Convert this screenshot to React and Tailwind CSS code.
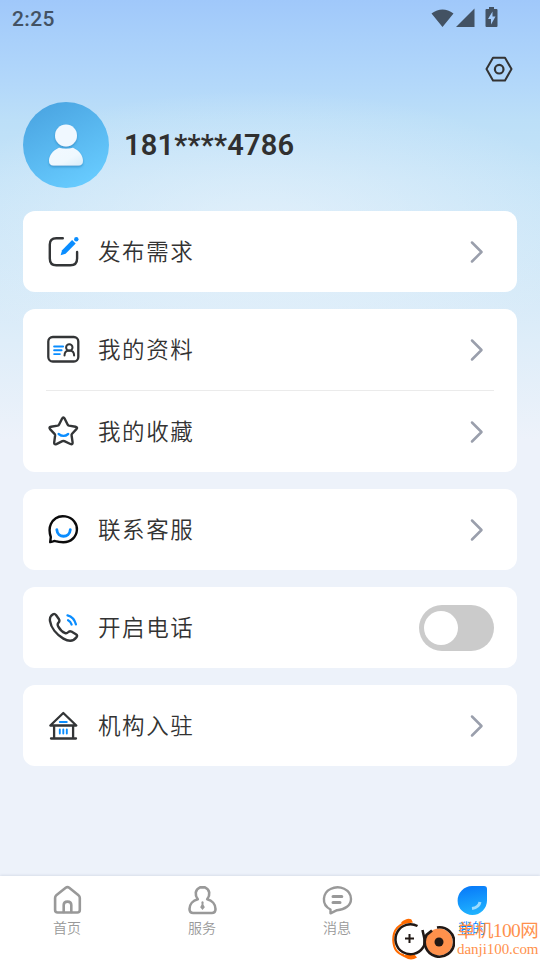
import React from "react";

const cjk = "font-['Noto_Sans_CJK_SC',sans-serif]";

function Chevron() {
  return (
    <svg width="18" height="26" viewBox="0 0 18 26" fill="none" stroke="#9a9fac" strokeWidth="2.5" strokeLinecap="round" strokeLinejoin="round" className="mr-[9px] shrink-0">
      <path d="M5 3.5 14.500 13 5 22.500" />
    </svg>
  );
}

function Row({ icon, label, children, className = "h-[81px]" }) {
  return (
    <div className={`flex items-center ${className}`}>
      <svg width="34" height="34" viewBox="-0.8 0.5 34 34" fill="none" stroke="#333537" strokeWidth="2.4" strokeLinecap="round" strokeLinejoin="round" className="shrink-0">
        {icon}
      </svg>
      <span className={`${cjk} ml-[18px] flex-1 pb-[4px] text-[22.5px] font-[350] leading-[34px] tracking-[1.6px] text-[#333]`}>{label}</span>
      {children || <Chevron />}
    </div>
  );
}

function Card({ children }) {
  return <section className="rounded-[12px] bg-white px-[23px]">{children}</section>;
}

const blue = "#0a8dff";

const icons = {
  edit: (
    <>
      <path d="M16 3.700H9.500Q3 3.700 3 10V24Q3 30.800 9.500 30.800H23.500Q30.300 30.800 30.300 24V17.500" />
      <path d="M13.800 20.800 15.300 15.800 25.300 5.500 28.900 8.900 18.800 19.200Z" fill={blue} stroke="none" />
      <circle cx="29.500" cy="4.700" r="2.200" fill={blue} stroke="none" />
    </>
  ),
  card: (
    <>
      <rect x="1.500" y="4.500" width="30" height="24.500" rx="4.500" strokeWidth="2.300" />
      <path d="M7.300 14h9M7.300 17.800h7.500M7.300 21.600h5.800" stroke={blue} strokeWidth="1.900" />
      <circle cx="22.500" cy="15" r="3.200" strokeWidth="2" />
      <path d="M17.700 23q0-5 4.800-5t4.800 5" strokeWidth="2" />
    </>
  ),
  star: (
    <>
      <path d="M15.200 4.200Q16.500 1.700 17.900 4.200L20.800 10Q21.200 10.900 22.200 11.100L28.700 12.200Q31.300 12.800 29.600 14.600L25.300 19.200Q24.600 20 24.800 21L25.800 27.800Q26 30.500 23.600 29.500L17.600 26.700Q16.600 26.300 15.600 26.700L9.600 29.600Q7.200 30.500 7.400 27.900L8.300 21.200Q8.400 20.100 7.700 19.300L3.200 14.600Q1.800 12.700 4.200 12.200L10.900 11.100Q11.900 10.900 12.300 10Z" />
      <path d="M11.800 19.500q5 3.800 9.600 0" stroke={blue} strokeWidth="2.3" />
    </>
  ),
  chat: (
    <>
      <path d="M3.400 29.600 4 24.500Q1.500 17 4.100 11.500C7 5.700 12.500 3 18.500 3.900C26 5 30.500 11 30.100 17.500C29.700 24.500 24 29.700 16.500 29.800Q11.800 29.700 8.600 28.700Q7.500 28.300 6.500 28.800Z" stroke="#0b0b0c" strokeWidth="2.4" />
      <path d="M10 17.200c.6 8.700 12.900 8.700 13.500 0" stroke={blue} strokeWidth="2.800" />
    </>
  ),
  phone: (
    <>
      <path d="M4.400 5.200 6.300 3.700Q7.800 2.800 9.200 4.500L12.200 8.800Q13.200 10.500 11.700 12.200C10.300 13.600 10.500 14.400 11.500 16.200C13.300 19.500 15.900 21.700 18.400 22.700Q20 23.200 21.300 21.800Q22.700 20.100 24.600 21.100L29.500 24.100Q30.900 25.100 29.700 26.800C26.500 31.200 21.500 31 16.600 28.100C9.700 24.100 4.200 17.200 3.200 10.500Q2.700 7 4.400 5.200Z" />
      <path d="M21.300 9.800q2.800 1.300 3.500 4.200M20.700 4.800q6.500 1.700 8.400 9" stroke={blue} strokeWidth="2.300" />
    </>
  ),
  house: (
    <>
      <path d="M3.500 17 16.500 4.500 29.500 17ZM7.300 17V29.500M26.300 17V29.500M4.200 30h25" strokeWidth="2.300" />
      <path d="M13 13.500h7M13 21v4M16.500 21v4M20 21v4" stroke={blue} strokeWidth="1.900" />
    </>
  ),
};

function Toggle() {
  return (
    <div className="flex h-[46px] w-[75px] items-center rounded-full bg-[#cbcbcb] pl-[5px]">
      <div className="size-[34px] rounded-full bg-white" />
    </div>
  );
}

function Tab({ label, children, active }) {
  return (
    <div className="flex flex-1 flex-col items-center pr-px pt-[8px]">
      <svg width="32" height="32" viewBox="-0.5 0 32 32" fill="none" stroke="#999" strokeWidth="2.700" strokeLinecap="round" strokeLinejoin="round">
        {children}
      </svg>
      <span className={`${cjk} text-[14px] font-[350] leading-[22px] ${active ? "text-[#0787ff]" : "text-[#999]"}`}>{label}</span>
    </div>
  );
}

function Watermark() {
  return (
    <div className="absolute bottom-0 right-[2px] flex h-[43px] items-end">
      <svg width="64" height="43" viewBox="0 0 64 43" fill="none" className="mr-[2px]">
        <path d="M20.500 3.500C7 6.500 2 14 2.200 23C2.500 32 7 37 13 38.200" stroke="#ff6b00" strokeWidth="2" />
        <path d="M10 5.600Q16 .5 20 2.300L22 5.500 12 7ZM10 38.500 23 37 26 40.500Q20 44.500 14 40.500Z" fill="#ff6b00" />
        <path d="M26.500 9A15 15 0 1 0 32 30.500C36 25 32.500 19.500 31.500 13" stroke="#211815" strokeWidth="2.5" />
        <path d="M14 21.500h9M18.500 17v9" stroke="#211815" strokeWidth="2" />
        <circle cx="48.200" cy="25" r="13.500" fill="#ff914c" />
        <path d="M46 10.500A14.700 14.700 0 1 1 35.500 18L41 13.500" stroke="#211815" strokeWidth="2.700" />
        <circle cx="48" cy="25" r="4.500" fill="#211815" />
      </svg>
      <div className="flex w-[81px] flex-col pb-[2px] text-[#ff914c]">
        <span className="whitespace-nowrap font-['Liberation_Serif','Noto_Sans_CJK_SC',serif] text-[18.500px] leading-[20px] tracking-[-0.6px]">单机<span className="text-[19.500px] tracking-[-0.6px]">100</span>网</span>
        <span className="whitespace-nowrap font-['Liberation_Serif',serif] text-[15px] leading-[17px] tracking-[-0.05px]">danji100.com</span>
      </div>
    </div>
  );
}

export default function App() {
  return (
    <div className="relative flex h-[960px] w-[540px] flex-col overflow-hidden bg-[#edf2fa] bg-[radial-gradient(ellipse_340px_140px_at_260px_230px,rgba(240,246,252,0.6),rgba(240,246,252,0)),linear-gradient(180deg,#a0c8fa_0px,#a9d0fa_40px,#b3d8fa_85px,#bcdff8_120px,#c6e4f8_180px,#d0e8f8_260px,#deedf9_340px,#edf2fa_440px)]">
      <header className="flex h-[36px] items-center justify-between pl-[12px] pr-[41px] text-[#435263]">
        <span className="pt-px font-[Roboto,sans-serif] text-[21px] font-[470] leading-[24px] tracking-[0.4px]">2:25</span>
        <svg width="68" height="22" viewBox="-0.5 0 68 22" fill="currentColor">
          <path d="M0 6.500Q11 -1.500 22 6.500L11 20ZM43 1.500V20H24.500Z" />
          <path fillRule="evenodd" d="M57.500 0h5v2h2.500q1 0 1 1v16q0 1-1 1H55q-1 0-1-1V3q0-1 1-1h2.500ZM61 4.500 56.500 12h3v5.500l4.500-8h-3Z" />
        </svg>
      </header>
      <div className="flex h-[66px] justify-end pr-[26px] pt-[18px]">
        <svg width="30" height="30" viewBox="0 0 30 30" fill="none" stroke="#333" strokeWidth="2" strokeLinejoin="round">
          <path d="M9 3.700H21L27.500 15 21 26.500H9L2.500 15Z" />
          <circle cx="15.200" cy="15.200" r="4.300" strokeWidth="2.200" />
        </svg>
      </div>
      <div className="flex h-[86px] items-center px-[23px]">
        <svg width="86" height="86" viewBox="0 0 86 86">
          <defs>
            <linearGradient id="avatar" x1=".2" y1="0" x2=".7" y2="1">
              <stop stopColor="#4aa4e1" />
              <stop offset="1" stopColor="#68ccff" />
            </linearGradient>
            <linearGradient id="person" x1="0" y1="0" x2="1" y2="1">
              <stop stopColor="#f2f9ff" />
              <stop offset=".6" stopColor="#eff8fe" />
              <stop offset="1" stopColor="#d9edf9" />
            </linearGradient>
            <filter id="personShadow" x="-30%" y="-30%" width="160%" height="160%">
              <feDropShadow dx="0" dy="1.5" stdDeviation="1.200" floodColor="#2585bd" floodOpacity=".7" />
            </filter>
          </defs>
          <circle cx="43" cy="43" r="43" fill="url(#avatar)" />
          <g filter="url(#personShadow)">
            <path d="M36 45.700Q43 48 50 45.700C56.500 48.500 60 54 60 58.700Q60 63.400 55.500 63.400H30.500Q26 63.400 26 58.700C26 54 29.500 48.500 36 45.700Z" fill="url(#person)" />
            <circle cx="43" cy="33.500" r="11" fill="#f0f8ff" />
          </g>
        </svg>
        <span className="ml-[15px] pt-px font-[Roboto,sans-serif] text-[29px] font-semibold tracking-[0.2px] text-[#303030]">181****4786</span>
      </div>
      <main className="flex flex-col gap-[17px] px-[23px] pt-[23px]">
        <Card><Row icon={icons.edit} label="发布需求" /></Card>
        <Card>
          <Row icon={icons.card} label="我的资料" />
          <div className="h-px bg-[#ebebeb]" />
          <Row icon={icons.star} label="我的收藏" />
        </Card>
        <Card><Row icon={icons.chat} label="联系客服" /></Card>
        <Card><Row icon={icons.phone} label="开启电话"><Toggle /></Row></Card>
        <Card><Row icon={icons.house} label="机构入驻" /></Card>
      </main>
      <nav className="mt-auto flex h-[84px] bg-white shadow-[0_-1px_2px_rgba(80,90,130,0.12)]">
        <Tab label="首页">
          <path d="M14.200 3.800 4.800 11.300Q3.600 12.300 3.600 14V26Q3.600 28.500 6.200 28.500H25.800Q28.300 28.500 28.300 26V14Q28.300 12.300 27 11.300L17.700 3.800Q16 2.400 14.200 3.800Z" strokeWidth="2.600" />
          <path d="M12.200 28V21q0-3.400 3.800-3.400t3.800 3.400v7" strokeWidth="2.600" />
        </Tab>
        <Tab label="服务">
          <path d="M13.500 3.400H18.500C23.500 5.800 24 10.500 20.700 15.300C25.500 16.500 29 20.200 29 25Q29 29 25.300 29H6.700Q3 29 3 25C3 20.200 6.500 16.500 11.300 15.300C8 10.500 8.500 5.800 13.500 3.400Z" strokeWidth="2.600" />
          <path d="M16 18.200v1.600" strokeWidth="2" />
          <path d="m16 18.800 2.300 4.500-2.300 2.700-2.300-2.700Z" fill="#999" stroke="none" />
        </Tab>
        <Tab label="消息">
          <path d="M9 29.300V25.500C-1 20.500 1.500 8.500 9 5C18 .5 29.500 5.500 29.500 15C29.500 21.500 23.500 25.500 15.500 26.200Z" strokeWidth="2.400" />
          <path d="M11.500 12.500h8.800M11.500 18.500h7" strokeWidth="3" />
        </Tab>
        <Tab label="我的" active>
          <defs>
            <linearGradient id="profile" x1=".35" y1="0" x2=".55" y2="1">
              <stop stopColor="#087af9" />
              <stop offset="1" stopColor="#20b4ff" />
            </linearGradient>
          </defs>
          <path d="M15.500 2H27.500Q30.500 2 30.500 5V16.500A14.700 14.500 0 1 1 15.500 2Z" fill="url(#profile)" stroke="none" />
          <path d="M23.500 18Q22.500 23.500 15.500 24.500" stroke="#9edcff" strokeWidth="3" strokeLinecap="butt" />
        </Tab>
      </nav>
      <Watermark />
    </div>
  );
}
